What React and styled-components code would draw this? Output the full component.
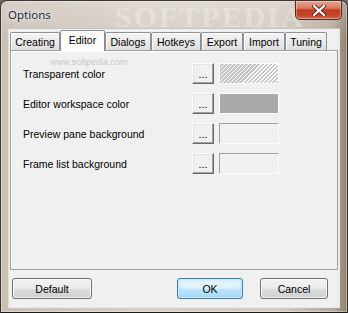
import React from "react";
import styled, { createGlobalStyle, css } from "styled-components";

const Global = createGlobalStyle`
  html, body { margin: 0; padding: 0; background: #6f6a64; }
  body { font-family: "Liberation Sans", Arial, sans-serif; }
  * { box-sizing: border-box; }
`;

const Window = styled.div`
  position: relative;
  width: 348px;
  height: 313px;
  display: flex;
  flex-direction: column;
  padding: 0 7px 4px 7px;
  border: 1px solid #3b3631;
  border-bottom-color: #1d1c1c;
  border-radius: 7px 7px 0 0;
  overflow: hidden;
  background:
    linear-gradient(to bottom, rgba(255,255,255,0.25), rgba(255,255,255,0) 40px),
    linear-gradient(to right, #c9bfb3 0%, #d6cec5 40%, #d3cbc2 80%, #b7aa9c 96%, #8f8173 100%);
  box-shadow: inset 0 0 0 1px rgba(255,255,255,0.35);
`;

const TitleBar = styled.div`
  height: 27px;
  display: flex;
  align-items: center;
  padding-bottom: 1px;
`;

const Title = styled.span`
  font-family: "Noto Sans", "Open Sans", sans-serif;
  font-size: 11.5px;
  color: #16263a;
  text-shadow: 0 0 6px rgba(255,255,255,0.9), 0 0 2px rgba(255,255,255,0.9);
`;

const Watermark = styled.div`
  position: absolute;
  pointer-events: none;
  left: 114px;
  top: 1px;
  font-family: "Liberation Serif", "Times New Roman", serif;
  font-weight: bold;
  font-size: 30px;
  line-height: 1;
  letter-spacing: 2px;
  white-space: nowrap;
  color: rgba(255, 255, 255, 0.28);
`;

const SmallMark = styled.div`
  position: absolute;
  pointer-events: none;
  left: 49px;
  top: 57px;
  font-family: "Liberation Sans", Arial, sans-serif;
  font-size: 9px;
  line-height: 1;
  color: rgba(160, 160, 160, 0.55);
`;

const CloseButton = styled.div`
  position: absolute;
  top: 0;
  right: 5px;
  width: 47px;
  height: 19px;
  border: 1px solid #5a2418;
  border-top: none;
  border-radius: 0 0 5px 5px;
  background: linear-gradient(to bottom, #e6a591 0%, #d57b61 40%, #c23d23 50%, #c4452a 80%, #d46e52 100%);
  box-shadow: inset 0 0 0 1px rgba(255,255,255,0.35);
  display: flex;
  align-items: center;
  justify-content: center;
`;

const Client = styled.div`
  flex: 1;
  display: flex;
  flex-direction: column;
  background: #f0f0f0;
  border: 1px solid;
  border-color: #cbc3ba #ebe7e2 #ebe7e2 #e4ded8;
`;

const TabRow = styled.div`
  height: 21px;
  display: flex;
  align-items: flex-end;
  padding-left: 1px;
  position: relative;
  z-index: 1;
`;

const Tab = styled.div`
  width: ${(p) => p.$w}px;
  height: 18px;
  display: flex;
  align-items: center;
  justify-content: center;
  font-size: 10.5px;
  color: #000;
  border: 1px solid #8e919a;
  border-bottom: none;
  border-radius: 2px 2px 0 0;
  background: linear-gradient(to bottom, #f4f4f4 0%, #ebebeb 50%, #dedede 100%);
  box-shadow: inset 1px 1px 0 #fff;
  ${(p) =>
    p.$active &&
    css`
      height: 21px;
      margin-bottom: -1px;
      align-items: flex-start;
      padding-top: 3px;
      background: #fcfcfc;
      box-shadow: none;
      border-color: #898c95;
    `}
`;

const Panel = styled.div`
  height: 220px;
  margin: 0 1px;
  border: 1px solid #9c9fa6;
  background: #f0f0f0;
  box-shadow: inset 1px 1px 0 #fff;
  padding: 12px 0 0 12px;
  display: grid;
  grid-template-columns: 164px 22px 60px;
  grid-auto-rows: 21px;
  column-gap: 5px;
  row-gap: 9px;
  align-content: start;
  justify-content: start;
`;

const Label = styled.div`
  display: flex;
  align-items: center;
  font-size: 10.5px;
  color: #000;
  padding-top: 1px;
  white-space: nowrap;
`;

const DotsButton = styled.div`
  height: 21px;
  display: flex;
  align-items: flex-end;
  justify-content: center;
  padding-bottom: 4px;
  font-size: 10.5px;
  line-height: 1;
  color: #000;
  background: #f0f0f0;
  border: 1px solid;
  border-color: #fff #696969 #696969 #fff;
  box-shadow: inset -1px -1px 0 #a0a0a0, inset 1px 1px 0 #e3e3e3;
`;

const Swatch = styled.div`
  height: 21px;
  border: 1px solid;
  border-color: #a0a0a0 #fff #fff #a0a0a0;
  ${(p) =>
    p.$kind === "hatch"
      ? css`
          border-color: #ffffff;
          background: repeating-linear-gradient(
            135deg,
            #ffffff 0px,
            #ffffff 1.4px,
            #c6c6c6 1.4px,
            #c6c6c6 2.83px
          );
        `
      : p.$kind === "solid"
      ? css`
          border-color: #ffffff;
          background: #a9a9a9;
        `
      : css`
          background: #f0f0f0;
        `}
`;

const ButtonBar = styled.div`
  display: flex;
  align-items: center;
  padding: 8px 11px 0 3px;
  gap: 17px;
`;

const Spacer = styled.div`
  flex: 1;
`;

const PushButton = styled.div`
  width: ${(p) => p.$w}px;
  height: 21px;
  display: flex;
  align-items: center;
  justify-content: center;
  font-size: 10.5px;
  color: #000;
  border: 1px solid #707070;
  border-radius: 3px;
  background: linear-gradient(to bottom, #f2f2f2 0%, #ebebeb 50%, #dddddd 51%, #cfcfcf 100%);
  box-shadow: inset 0 0 0 1px rgba(255,255,255,0.75);
  ${(p) =>
    p.$default &&
    css`
      border-color: #3c7fb1;
      background: linear-gradient(to bottom, #eaf6fd 0%, #d9f0fc 50%, #bee6fd 51%, #a7d9f5 100%);
      box-shadow: inset 0 0 0 1px #c8ecfe, inset 0 0 2px 1px rgba(120,200,245,0.6);
    `}
`;

const tabs = [
  { label: "Creating", w: 50 },
  { label: "Editor", w: 45, active: true },
  { label: "Dialogs", w: 46 },
  { label: "Hotkeys", w: 50 },
  { label: "Export", w: 42 },
  { label: "Import", w: 42 },
  { label: "Tuning", w: 42 },
];

const rows = [
  { label: "Transparent color", kind: "hatch" },
  { label: "Editor workspace color", kind: "solid" },
  { label: "Preview pane background", kind: "empty" },
  { label: "Frame list background", kind: "empty" },
];

function CloseIcon() {
  return (
    <svg width="14" height="11" viewBox="0 0 14 11">
      <path d="M2 1 L12 10 M12 1 L2 10" stroke="#5a2c20" strokeWidth="4" strokeLinecap="round" />
      <path d="M2 1 L12 10 M12 1 L2 10" stroke="#ffffff" strokeWidth="2.2" strokeLinecap="round" />
    </svg>
  );
}

export default function App() {
  return (
    <>
      <Global />
      <Window>
        <Watermark>SOFTPEDIA</Watermark>
        <TitleBar>
          <Title>Options</Title>
        </TitleBar>
        <CloseButton>
          <CloseIcon />
        </CloseButton>
        <Client>
          <TabRow>
            {tabs.map((t) => (
              <Tab key={t.label} $w={t.w} $active={t.active}>
                {t.label}
              </Tab>
            ))}
          </TabRow>
          <Panel>
            {rows.map((r) => (
              <React.Fragment key={r.label}>
                <Label>{r.label}</Label>
                <DotsButton>...</DotsButton>
                <Swatch $kind={r.kind} />
              </React.Fragment>
            ))}
          </Panel>
          <ButtonBar>
            <PushButton $w={80}>Default</PushButton>
            <Spacer />
            <PushButton $w={66} $default>
              OK
            </PushButton>
            <PushButton $w={68}>Cancel</PushButton>
          </ButtonBar>
        </Client>
        <SmallMark>www.softpedia.com</SmallMark>
      </Window>
    </>
  );
}
